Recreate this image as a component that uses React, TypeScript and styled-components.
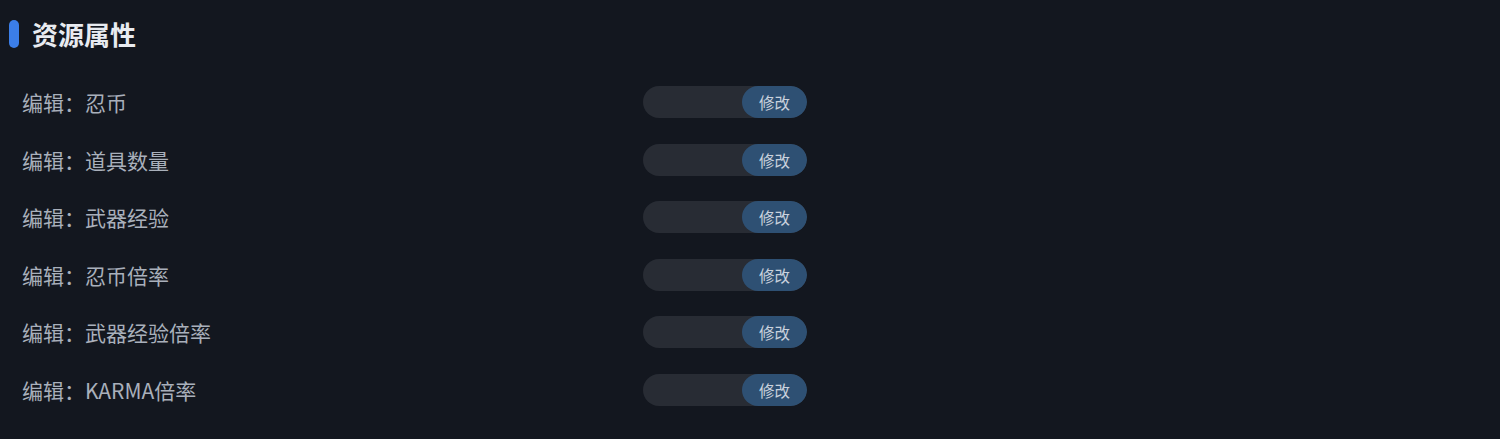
import React from "react";
import styled, { createGlobalStyle } from "styled-components";

const GlobalStyle = createGlobalStyle`
  html, body {
    margin: 0;
    padding: 0;
    background: #13171f;
  }
  body {
    font-family: "Noto Sans CJK SC", "Noto Sans", sans-serif;
  }
`;

const Page = styled.div`
  width: 1500px;
  height: 439px;
  box-sizing: border-box;
  padding: 20px 0 0 9px;
  background: #13171f;
  display: flex;
  flex-direction: column;
`;

const SectionHeader = styled.div`
  display: flex;
  align-items: center;
  gap: 13px;
  height: 28px;
`;

const Accent = styled.span`
  width: 10px;
  height: 28px;
  border-radius: 5px;
  background: #3b7ee8;
`;

const Title = styled.h2`
  margin: 0;
  font-size: 26px;
  line-height: 28px;
  font-weight: 700;
  color: #e8ebf0;
`;

const List = styled.div`
  display: flex;
  flex-direction: column;
  gap: 25.5px;
  padding: 38px 0 0 13px;
`;

const Row = styled.div`
  display: flex;
  align-items: center;
  height: 32px;
`;

const Label = styled.span`
  width: 621px;
  font-size: 21px;
  color: #a9b0bb;
  line-height: 32px;
`;

const Field = styled.div`
  display: flex;
  width: 164px;
  height: 32px;
  border-radius: 16px;
  background: #282c34;
  overflow: hidden;
`;

const Input = styled.input`
  flex: 1;
  min-width: 0;
  border: none;
  outline: none;
  background: transparent;
  color: #c8ced8;
  padding: 0 12px;
  font: inherit;
  font-size: 14px;
`;

const Button = styled.button`
  width: 65px;
  border: none;
  border-radius: 16px;
  background: #2e5073;
  color: #c9d2dd;
  font-family: inherit;
  font-size: 15.5px;
  padding: 0;
  cursor: pointer;
`;

const items = ["忍币", "道具数量", "武器经验", "忍币倍率", "武器经验倍率", "KARMA倍率"];

export default function App() {
  return (
    <>
      <GlobalStyle />
      <Page>
        <SectionHeader>
          <Accent />
          <Title>资源属性</Title>
        </SectionHeader>
        <List>
          {items.map(name => (
            <Row key={name}>
              <Label>编辑：{name}</Label>
              <Field>
                <Input />
                <Button>修改</Button>
              </Field>
            </Row>
          ))}
        </List>
      </Page>
    </>
  );
}
